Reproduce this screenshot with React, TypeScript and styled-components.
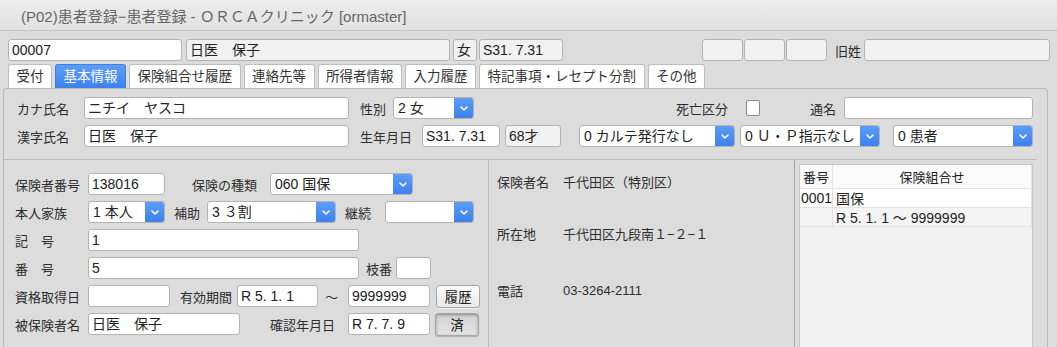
import React from 'react';
import styled, { createGlobalStyle } from 'styled-components';

const GlobalStyle = createGlobalStyle`
  html, body {
    margin: 0;
    padding: 0;
  }

  body {
    background: #dcdcdc;
    font-family: "Liberation Sans", "Noto Sans CJK JP", sans-serif;
    color: #333;
  }

  #root {
    width: 1057px;
    height: 347px;
    overflow: hidden;
  }
`;

const Window = styled.div`
  display: flex;
  flex-direction: column;
  width: 1057px;
  height: 347px;
  background: #dcdcdc;
`;

const TitleBar = styled.div`
  flex-shrink: 0;
  height: 30px;
  display: flex;
  align-items: center;
  padding-left: 21px;
  background: linear-gradient(#ededed, #e1e1e1);
  border-bottom: 1px solid #c4c4c4;
  font-size: 15px;
  color: #666;
  white-space: nowrap;
`;

const Body = styled.div`
  flex: 1;
  min-height: 0;
  display: flex;
  flex-direction: column;
  padding: 8px 0 0 3px;
`;

const Row = styled.div<{ $ml?: number }>`
  display: flex;
  align-items: center;
  height: 22px;
  flex-shrink: 0;
  margin-left: ${(p) => p.$ml ?? 0}px;
`;

const Label = styled.span<{ $w: number; $ml?: number }>`
  flex-shrink: 0;
  width: ${(p) => p.$w}px;
  margin-left: ${(p) => p.$ml ?? 0}px;
  font-size: 13px;
  color: #2e2e2e;
  white-space: nowrap;
`;

const Field = styled.div<{ $w: number; $ml?: number; $ro?: boolean }>`
  box-sizing: border-box;
  flex-shrink: 0;
  width: ${(p) => p.$w}px;
  height: 22px;
  margin-left: ${(p) => p.$ml ?? 0}px;
  padding: 0 3px;
  border: 1px solid #b3b3b3;
  border-radius: 3px;
  background: ${(p) => (p.$ro ? '#f1f1f1' : '#fff')};
  font-size: 14px;
  line-height: 20px;
  color: #222;
  white-space: nowrap;
  overflow: hidden;
`;

const SelectBox = styled.div<{ $w: number; $ml?: number }>`
  box-sizing: border-box;
  flex-shrink: 0;
  display: flex;
  width: ${(p) => p.$w}px;
  height: 22px;
  margin-left: ${(p) => p.$ml ?? 0}px;
  border: 1px solid #b3b3b3;
  border-radius: 3px;
  background: #fff;
  overflow: hidden;
`;

const SelectText = styled.span`
  flex: 1;
  padding: 0 4px;
  font-size: 14px;
  line-height: 20px;
  color: #222;
  white-space: nowrap;
  overflow: hidden;
`;

const SelectButton = styled.span`
  width: 19px;
  display: flex;
  align-items: center;
  justify-content: center;
  background: linear-gradient(#5c9df8, #3c80ee);
`;

const CheckBox = styled.span<{ $ml?: number }>`
  box-sizing: border-box;
  flex-shrink: 0;
  width: 14px;
  height: 16px;
  margin-left: ${(p) => p.$ml ?? 0}px;
  border: 1px solid #8a8a8a;
  border-radius: 2px;
  background: #fff;
`;

const Button = styled.div<{ $ml?: number; $pressed?: boolean }>`
  box-sizing: border-box;
  flex-shrink: 0;
  width: 44px;
  height: 23px;
  margin-left: ${(p) => p.$ml ?? 0}px;
  display: flex;
  align-items: center;
  justify-content: center;
  border: 1px solid #a6a6a6;
  border-radius: 3px;
  font-size: 13.5px;
  color: #222;
  background: ${(p) => (p.$pressed ? 'linear-gradient(#d2d2d2, #e4e4e4)' : 'linear-gradient(#fbfbfb, #e9e9e9)')};
  box-shadow: ${(p) => (p.$pressed ? 'inset 0 1px 3px rgba(0,0,0,0.35), 0 1px 1px rgba(0,0,0,0.2)' : '0 1px 0 rgba(255,255,255,0.6)')};
`;

const TabBar = styled.div`
  flex-shrink: 0;
  display: flex;
  gap: 3px;
  height: 24px;
  margin: 3px 0 0 5px;
`;

const Tab = styled.div<{ $active?: boolean }>`
  box-sizing: border-box;
  height: 24px;
  padding: 0 7.5px;
  border: 1px solid ${(p) => (p.$active ? '#3f7fe0' : '#bdbdbd')};
  border-bottom: none;
  border-radius: 3px 3px 0 0;
  background: ${(p) => (p.$active ? 'linear-gradient(#5d9ef8, #3d81ee)' : '#fff')};
  color: ${(p) => (p.$active ? '#fff' : '#333')};
  font-size: 13.5px;
  line-height: 23px;
  white-space: nowrap;
`;

const Panel = styled.div`
  flex: 1;
  min-height: 0;
  display: flex;
  flex-direction: column;
  margin-right: 9px;
  border: 1px solid #b9b9b9;
  border-bottom: none;
  border-radius: 4px 4px 0 0;
`;

const UpperSection = styled.div`
  display: flex;
  flex-direction: column;
  gap: 6px;
  margin-right: 10px;
  padding: 8px 0 12px 13px;
  border-bottom: 1px solid #bdbdbd;
`;

const LowerSection = styled.div`
  flex: 1;
  min-height: 0;
  display: flex;
  margin-right: 10px;
`;

const LeftColumn = styled.div`
  box-sizing: border-box;
  width: 485px;
  display: flex;
  flex-direction: column;
  gap: 6px;
  padding: 13px 0 0 11px;
  border-right: 1px solid #bdbdbd;
`;

const MiddleColumn = styled.div`
  box-sizing: border-box;
  width: 305px;
  padding: 10px 0 0 8px;
`;

const InfoRow = styled.div<{ $mt?: number }>`
  display: grid;
  grid-template-columns: 66px 1fr;
  height: 22px;
  align-items: center;
  margin-top: ${(p) => p.$mt ?? 0}px;
  font-size: 13px;
  color: #2e2e2e;
  white-space: nowrap;
`;

const RightColumn = styled.div`
  box-sizing: border-box;
  width: 242px;
  display: flex;
  padding: 4px 3px 0 4px;
  border-left: 1px solid #a9a9a9;
`;

const List = styled.div`
  flex: 1;
  border: 1px solid #c6c6c6;
  border-bottom: none;
  background: #f2f2f2;
  font-size: 13px;
  color: #222;
`;

const ListRow = styled.div<{ $bg: string; $h: number }>`
  display: grid;
  grid-template-columns: 33px 1fr;
  height: ${(p) => p.$h}px;
  background: ${(p) => p.$bg};
  border-bottom: 1px solid #e2e2e2;
  white-space: nowrap;
`;

const ListCell = styled.div<{ $center?: boolean; $size?: number; $pl?: number }>`
  display: flex;
  align-items: center;
  justify-content: ${(p) => (p.$center ? 'center' : 'flex-start')};
  padding-left: ${(p) => (p.$center ? 0 : p.$pl ?? 3)}px;
  font-size: ${(p) => p.$size ?? 13}px;
  border-right: 1px solid #e2e2e2;
  overflow: hidden;
`;

const Chevron = () => (
  <svg width="8" height="5" viewBox="0 0 8 5">
    <polyline points="1,1 4,4 7,1" fill="none" stroke="#fff" strokeWidth="1.6" strokeLinecap="round" strokeLinejoin="round" />
  </svg>
);

const Select = ({ w, ml, value }: { w: number; ml?: number; value: string }) => (
  <SelectBox $w={w} $ml={ml}>
    <SelectText>{value}</SelectText>
    <SelectButton><Chevron /></SelectButton>
  </SelectBox>
);

const tabs = ['受付', '基本情報', '保険組合せ履歴', '連絡先等', '所得者情報', '入力履歴', '特記事項・レセプト分割', 'その他'];

const App = () => {
  return (
    <Window>
      <GlobalStyle />
      <TitleBar>(P02)患者登録−患者登録 - ＯＲＣＡクリニック [ormaster]</TitleBar>
      <Body>
        <Row $ml={5}>
          <Field $w={174}>00007</Field>
          <Field $w={264} $ml={4} $ro>日医　保子</Field>
          <Field $w={24} $ml={3} $ro>女</Field>
          <Field $w={84} $ml={2} $ro>S31. 7.31</Field>
          <Field $w={41} $ml={139} $ro />
          <Field $w={41} $ml={1} $ro />
          <Field $w={41} $ml={1} $ro />
          <Label $w={29} $ml={8}>旧姓</Label>
          <Field $w={186} $ro />
        </Row>
        <TabBar>
          {tabs.map((t) => (
            <Tab key={t} $active={t === '基本情報'}>{t}</Tab>
          ))}
        </TabBar>
        <Panel>
          <UpperSection>
            <Row>
              <Label $w={67}>カナ氏名</Label>
              <Field $w={265}>ニチイ　ヤスコ</Field>
              <Label $w={33} $ml={11}>性別</Label>
              <Select w={81} value="2 女" />
              <Label $w={70} $ml={202}>死亡区分</Label>
              <CheckBox />
              <Label $w={34} $ml={50}>通名</Label>
              <Field $w={189} />
            </Row>
            <Row>
              <Label $w={67}>漢字氏名</Label>
              <Field $w={265}>日医　保子</Field>
              <Label $w={62} $ml={11}>生年月日</Label>
              <Field $w={78}>S31. 7.31</Field>
              <Field $w={56} $ml={5} $ro>68才</Field>
              <Select w={156} ml={18} value="0 カルテ発行なし" />
              <Select w={140} ml={5} value="0 Ｕ・Ｐ指示なし" />
              <Select w={140} ml={13} value="0 患者" />
            </Row>
          </UpperSection>
          <LowerSection>
            <LeftColumn>
              <Row>
                <Label $w={73}>保険者番号</Label>
                <Field $w={77}>138016</Field>
                <Label $w={78} $ml={27}>保険の種類</Label>
                <Select w={143} value="060 国保" />
              </Row>
              <Row>
                <Label $w={73}>本人家族</Label>
                <Select w={77} value="1 本人" />
                <Label $w={33} $ml={9}>補助</Label>
                <Select w={129} value="3 ３割" />
                <Label $w={40} $ml={9}>継続</Label>
                <Select w={89} value="" />
              </Row>
              <Row>
                <Label $w={73}>記　号</Label>
                <Field $w={271}>1</Field>
              </Row>
              <Row>
                <Label $w={73}>番　号</Label>
                <Field $w={271}>5</Field>
                <Label $w={30} $ml={7}>枝番</Label>
                <Field $w={35} />
              </Row>
              <Row>
                <Label $w={73}>資格取得日</Label>
                <Field $w={82} />
                <Label $w={57} $ml={10}>有効期間</Label>
                <Field $w={81}>R 5. 1. 1</Field>
                <Label $w={23} $ml={7}>～</Label>
                <Field $w={82}>9999999</Field>
                <Button $ml={6}>履歴</Button>
              </Row>
              <Row>
                <Label $w={73}>被保険者名</Label>
                <Field $w={152}>日医　保子</Field>
                <Label $w={78} $ml={30}>確認年月日</Label>
                <Field $w={82}>R 7. 7. 9</Field>
                <Button $ml={5} $pressed>済</Button>
              </Row>
            </LeftColumn>
            <MiddleColumn>
              <InfoRow>
                <span>保険者名</span>
                <span>千代田区（特別区）</span>
              </InfoRow>
              <InfoRow $mt={30}>
                <span>所在地</span>
                <span>千代田区九段南１−２−１</span>
              </InfoRow>
              <InfoRow $mt={35}>
                <span>電話</span>
                <span>03-3264-2111</span>
              </InfoRow>
            </MiddleColumn>
            <RightColumn>
              <List>
                <ListRow $bg="#fbfbfb" $h={23}>
                  <ListCell $center>番号</ListCell>
                  <ListCell $center>保険組合せ</ListCell>
                </ListRow>
                <ListRow $bg="#fff" $h={18}>
                  <ListCell $size={14} $pl={1}>0001</ListCell>
                  <ListCell $size={14}>国保</ListCell>
                </ListRow>
                <ListRow $bg="#f4f4f4" $h={18}>
                  <ListCell />
                  <ListCell $size={14}>R 5. 1. 1 ～ 9999999</ListCell>
                </ListRow>
              </List>
            </RightColumn>
          </LowerSection>
        </Panel>
      </Body>
    </Window>
  );
};

export default App;
